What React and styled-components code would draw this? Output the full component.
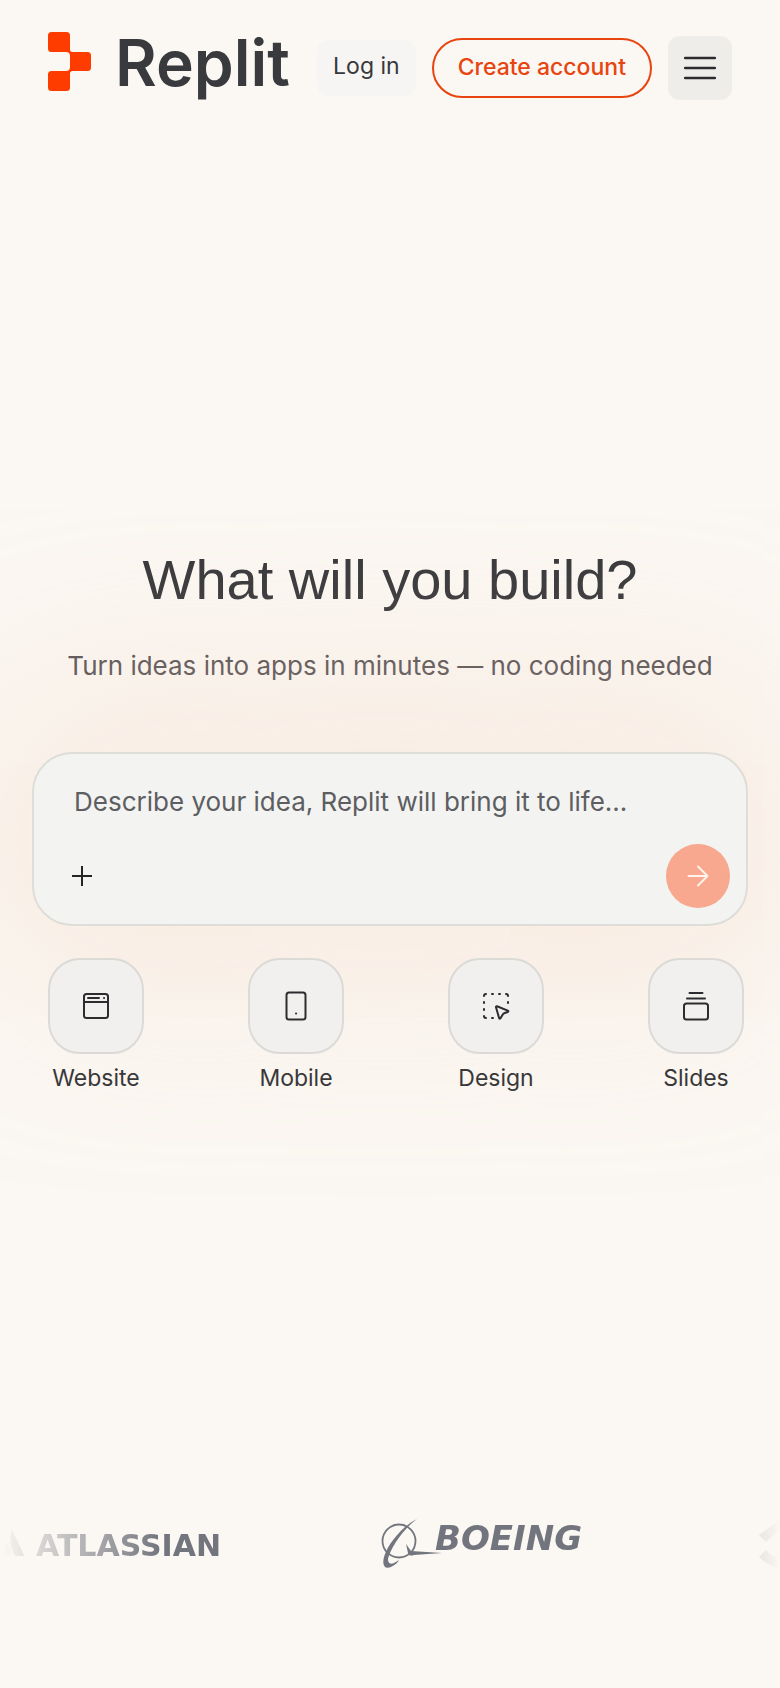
import React from 'react';
import styled, { createGlobalStyle } from 'styled-components';

const GlobalStyle = createGlobalStyle`
    * {
        box-sizing: border-box;
    }

    body {
        margin: 0;
        background-color: #fbf7f2;
        color: #38383b;
        font-family: 'Inter', 'Liberation Sans', sans-serif;
    }

    button, textarea {
        font-family: inherit;
    }
`;

const Page = styled.div`
    display: flex;
    flex-direction: column;
    min-height: 100vh;
    overflow: hidden;
`;

const Header = styled.header`
    display: flex;
    align-items: flex-start;
    justify-content: space-between;
    padding: 32px 48px 0;
`;

const Brand = styled.a`
    display: flex;
    align-items: flex-start;
    gap: 24px;
    color: #383a3d;
    text-decoration: none;
`;

const BrandName = styled.span`
    font-size: 64px;
    font-weight: 600;
    line-height: 62px;
`;

const HeaderActions = styled.nav`
    display: flex;
    align-items: center;
    gap: 16px;
    padding-top: 4px;
`;

const LoginButton = styled.button`
    height: 56px;
    padding: 0 16px 4px;
    border: none;
    border-radius: 12px;
    background-color: #f6f5f4;
    color: #38383b;
    font-size: 23px;
    white-space: nowrap;
    cursor: pointer;
`;

const CreateButton = styled.button`
    height: 60px;
    padding: 0 24px 2px;
    border: 2px solid #e8440f;
    border-radius: 30px;
    background-color: transparent;
    color: #e8440f;
    font-size: 23px;
    font-weight: 500;
    white-space: nowrap;
    cursor: pointer;
`;

const MenuButton = styled.button`
    display: flex;
    align-items: center;
    justify-content: center;
    width: 64px;
    height: 64px;
    padding: 0;
    border: none;
    border-radius: 12px;
    background-color: #eeedea;
    color: #2c2c2e;
    cursor: pointer;
`;

const Hero = styled.main`
    display: flex;
    flex-direction: column;
    padding: 448px 32px 80px;
`;

const Title = styled.h1`
    margin: 0;
    font-family: 'Liberation Sans', sans-serif;
    font-size: 56px;
    font-weight: 400;
    line-height: 64px;
    text-align: center;
`;

const Subtitle = styled.p`
    margin: 36px 0 0;
    color: #555053;
    font-size: 26px;
    line-height: 36px;
    text-align: center;
`;

const Prompt = styled.form`
    display: flex;
    flex-direction: column;
    margin-top: 68px;
    padding: 30px 16px 16px;
    border: 2px solid #deddd7;
    border-radius: 40px;
    background-color: #f3f3f1;
    box-shadow: 0 0 200px 30px rgba(245, 215, 196, 0.5);
`;

const PromptInput = styled.textarea`
    height: 40px;
    margin: 0 24px;
    padding: 0;
    border: none;
    outline: none;
    resize: none;
    overflow: hidden;
    background: transparent;
    color: #38383b;
    font-size: 26px;
    line-height: 36px;

    &::placeholder {
        color: #5c5e62;
        opacity: 1;
    }
`;

const PromptActions = styled.div`
    display: flex;
    align-items: center;
    justify-content: space-between;
    margin-top: 20px;
`;

const RoundButton = styled.button`
    display: flex;
    align-items: center;
    justify-content: center;
    width: 64px;
    height: 64px;
    padding: 0;
    border: none;
    border-radius: 50%;
    background-color: ${({ $filled }) => ($filled ? '#f7a88e' : 'transparent')};
    color: ${({ $filled }) => ($filled ? '#fff3ee' : '#242426')};
    cursor: pointer;
`;

/* positioned so the prompt's glow stays underneath the tiles */
const Categories = styled.div`
    position: relative;
    display: flex;
    justify-content: space-between;
    margin-top: 32px;
    padding: 0 4px 0 16px;
`;

const Category = styled.button`
    display: flex;
    flex-direction: column;
    align-items: center;
    gap: 8px;
    width: 96px;
    padding: 0;
    border: none;
    background: transparent;
    color: #38383b;
    font-size: 23px;
    line-height: 32px;
    cursor: pointer;
`;

const CategoryTile = styled.span`
    display: flex;
    align-items: center;
    justify-content: center;
    width: 96px;
    height: 96px;
    border: 2px solid #dcdad6;
    border-radius: 32px;
    background-color: #f1f0ee;
    color: #2c2c2e;
`;

const Customers = styled.section`
    display: flex;
    align-items: center;
    gap: 160px;
    height: 64px;
    margin: auto 0 112px;
    color: #72757e;
    mask-image: linear-gradient(to right, transparent, #000 160px, #000 calc(100% - 160px), transparent);
`;

const Customer = styled.div`
    display: flex;
    flex-shrink: 0;
    align-items: center;
    gap: 12px;
`;

const AtlassianName = styled.span`
    padding-top: 4px;
    font-family: 'DejaVu Sans', sans-serif;
    font-size: 30px;
    font-weight: 700;
    line-height: 32px;
`;

const BoeingName = styled.span`
    padding-bottom: 12px;
    font-family: 'DejaVu Sans', sans-serif;
    font-size: 34px;
    font-style: italic;
    font-weight: 700;
    line-height: 32px;
`;

const BoeingLogo = styled(Customer)`
    gap: 0;
    min-width: 218px;

    svg {
        margin-right: -8px;
    }
`;

const stroke = {
    fill: 'none',
    stroke: 'currentColor',
    strokeWidth: 2,
    strokeLinecap: 'round',
    strokeLinejoin: 'round',
};

const ReplitMark = () => (
    <svg width="43" height="59" viewBox="0 0 43 59" fill="#ff3c00" aria-hidden="true">
        <path d="M3.5 0H18.5Q22 0 22 3.5V17.5Q22 20 24.5 20H39.5Q43 20 43 23.5V35.5Q43 39 39.5 39H24.5Q22 39 22 41.5V55.5Q22 59 18.5 59H3.5Q0 59 0 55.5V42.5Q0 39 3.5 39H18Q22 39 22 35V24Q22 20 18 20H3.5Q0 20 0 16.5V3.5Q0 0 3.5 0Z" />
    </svg>
);

const MenuIcon = () => (
    <svg width="32" height="24" viewBox="0 0 32 24" {...stroke} strokeWidth="2.4" aria-hidden="true">
        <path d="M1 2H31M1 12H31M1 22H31" />
    </svg>
);

const PlusIcon = () => (
    <svg width="20" height="20" viewBox="0 0 20 20" {...stroke} strokeLinecap="butt" aria-hidden="true">
        <path d="M10 0V20M0 10H20" />
    </svg>
);

const ArrowIcon = () => (
    <svg width="22" height="22" viewBox="0 0 22 22" {...stroke} aria-hidden="true">
        <path d="M1.5 11H20.5M11 1.5L20.5 11L11 20.5" />
    </svg>
);

const WebsiteIcon = () => (
    <svg width="32" height="32" viewBox="0 0 32 32" {...stroke} aria-hidden="true">
        <rect x="4" y="4" width="24" height="24" rx="2.5" />
        <path d="M4 12H28M8 8H19M24 8H24.1" />
    </svg>
);

const MobileIcon = () => (
    <svg width="32" height="32" viewBox="0 0 32 32" {...stroke} aria-hidden="true">
        <rect x="6.5" y="2.5" width="19" height="27" rx="2.5" />
        <path d="M16 23.5H16.1" />
    </svg>
);

const DesignIcon = () => (
    <svg width="32" height="32" viewBox="0 0 32 32" {...stroke} aria-hidden="true">
        <path d="M6 4Q4 4 4 6M12 4H13M19 4H20M26 4Q28 4 28 6M4 12V13M4 19V20M28 12V13M4 26Q4 28 6 28M12 28H13" />
        <path d="M17 16.2L27.8 20.6Q29 21.3 27.8 22L24 23.3Q23.3 23.6 22.9 24.3L20.5 28.2Q19.5 29.2 19.1 28L16 17.2Q15.9 16 17 16.2Z" />
    </svg>
);

const SlidesIcon = () => (
    <svg width="32" height="32" viewBox="0 0 32 32" {...stroke} aria-hidden="true">
        <path d="M9.5 3H22.5M7 8.5H25" />
        <rect x="4" y="13.5" width="24" height="16" rx="2.5" />
    </svg>
);

const AtlassianMark = () => (
    <svg width="24" height="28" viewBox="0 0 24 28" fill="currentColor" aria-hidden="true">
        <path d="M12 0L24 25Q24 26 23 26H16Q15 26 14.5 25Q7 12 12 0Z" />
        <path d="M7 12Q13 20 9 26H1Q0 26 0 25Z" opacity="0.6" />
    </svg>
);

const BoeingMark = () => (
    <svg width="62" height="50" viewBox="0 0 62 50" aria-hidden="true">
        <circle cx="18" cy="22" r="16.5" fill="none" stroke="currentColor" strokeWidth="1.8" />
        <path
            fill="currentColor"
            d="M36 0C22 7 7 24 3 38C0 50 7 52 16 44L18 41C11 46 7 46 7 40C9 30 22 10 36 0ZM25 25L30 32L61 34L33 36C30 37 28 37 27 34Z"
        />
    </svg>
);

const PartnerMark = () => (
    <svg width="22" height="50" viewBox="0 0 22 50" fill="currentColor" aria-hidden="true">
        <path d="M22 0L0 16L7 23L22 10Z" />
        <path d="M7 31L0 38Q10 48 22 50V40Q13 38 7 31Z" />
    </svg>
);

const categories = [
    { label: 'Website', Icon: WebsiteIcon },
    { label: 'Mobile', Icon: MobileIcon },
    { label: 'Design', Icon: DesignIcon },
    { label: 'Slides', Icon: SlidesIcon },
];

function App() {
    return (
        <Page>
            <GlobalStyle />
            <Header>
                <Brand href="#">
                    <ReplitMark />
                    <BrandName>Replit</BrandName>
                </Brand>
                <HeaderActions>
                    <LoginButton>Log in</LoginButton>
                    <CreateButton>Create account</CreateButton>
                    <MenuButton aria-label="Open menu">
                        <MenuIcon />
                    </MenuButton>
                </HeaderActions>
            </Header>

            <Hero>
                <Title>What will you build?</Title>
                <Subtitle>Turn ideas into apps in minutes — no coding needed</Subtitle>
                <Prompt onSubmit={(e) => e.preventDefault()}>
                    <PromptInput
                        rows={1}
                        aria-label="Describe your idea"
                        placeholder="Describe your idea, Replit will bring it to life..."
                    />
                    <PromptActions>
                        <RoundButton type="button" aria-label="Add attachment">
                            <PlusIcon />
                        </RoundButton>
                        <RoundButton type="submit" $filled aria-label="Send">
                            <ArrowIcon />
                        </RoundButton>
                    </PromptActions>
                </Prompt>
                <Categories>
                    {categories.map(({ label, Icon }) => (
                        <Category key={label} type="button">
                            <CategoryTile>
                                <Icon />
                            </CategoryTile>
                            {label}
                        </Category>
                    ))}
                </Categories>
            </Hero>

            <Customers aria-label="Customers">
                <Customer>
                    <AtlassianMark />
                    <AtlassianName>ATLASSIAN</AtlassianName>
                </Customer>
                <BoeingLogo>
                    <BoeingMark />
                    <BoeingName>BOEING</BoeingName>
                </BoeingLogo>
                <Customer>
                    <PartnerMark />
                </Customer>
            </Customers>
        </Page>
    );
}

export default App;
